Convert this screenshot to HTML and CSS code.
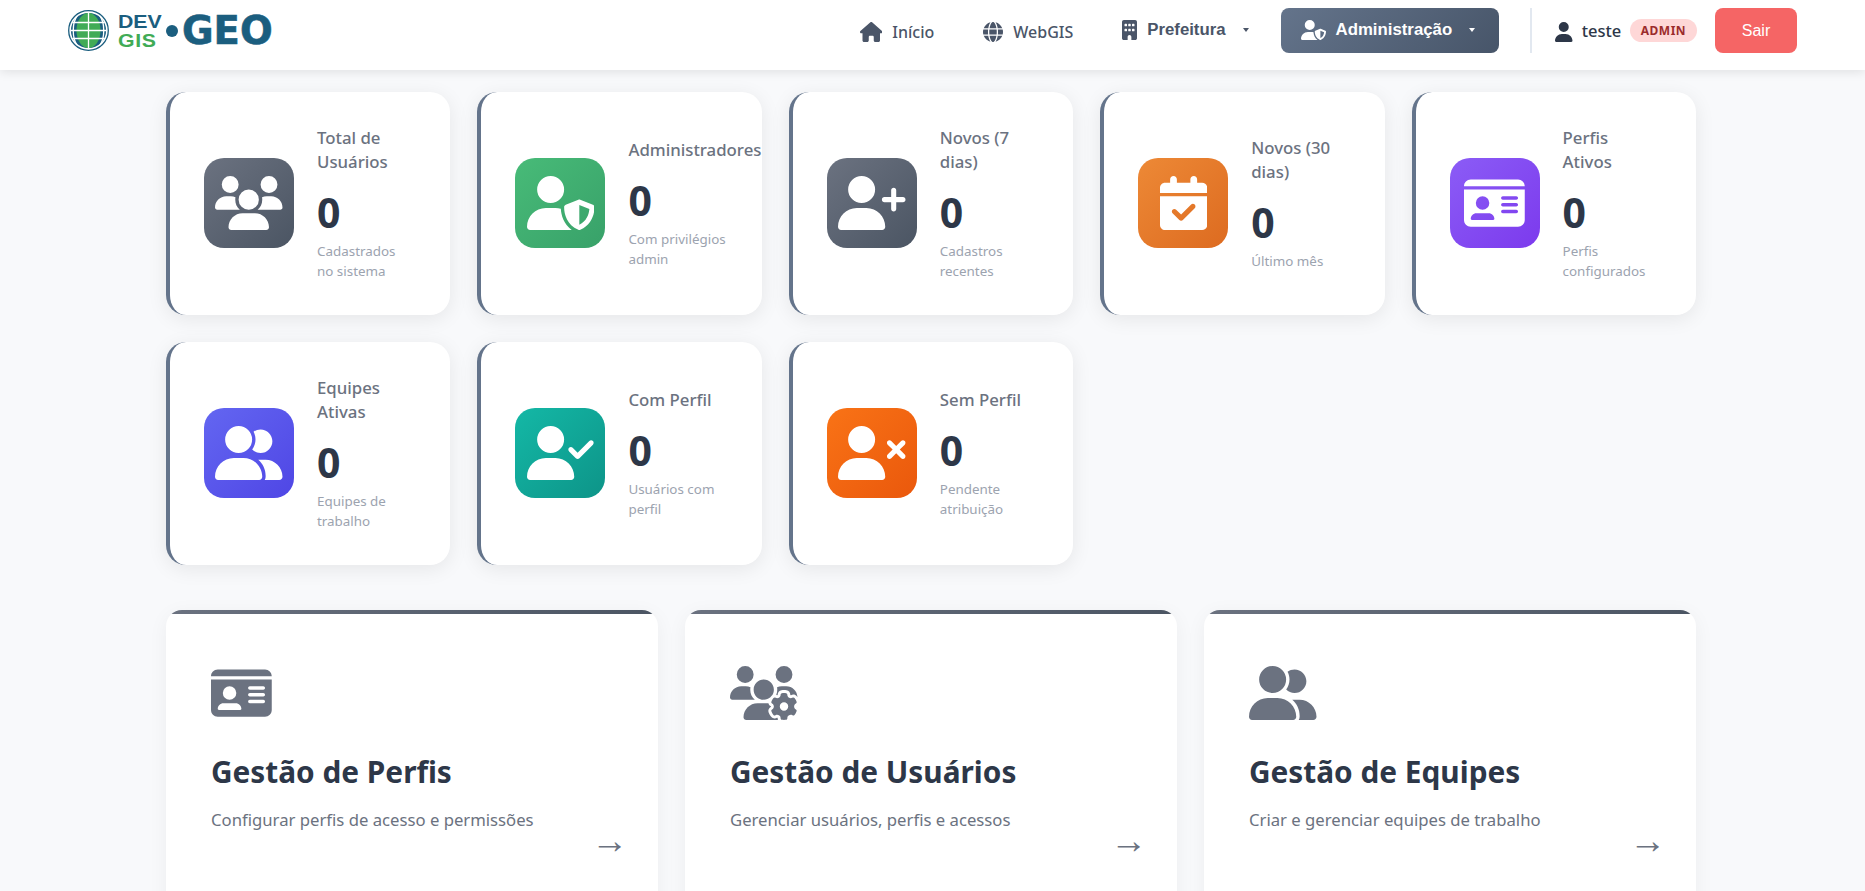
FILE: index.html
```html
<!DOCTYPE html>
<html lang="pt-BR">
<head>
<meta charset="utf-8">
<title>DevGIS GEO - Administração</title>
<link rel="stylesheet" href="styles.css">
</head>
<body>
<svg class="sprite" xmlns="http://www.w3.org/2000/svg">
<defs>
<g id="i-house"><path d="M575.8 255.5c0 18-15 32.1-32 32.1h-32l.7 160.2c0 2.7-.2 5.4-.5 8.1V472c0 22.1-17.9 40-40 40H456c-1.1 0-2.2 0-3.3-.1c-1.4 .1-2.8 .1-4.2 .1H416 392c-22.1 0-40-17.9-40-40V448 384c0-17.7-14.3-32-32-32H256c-17.7 0-32 14.3-32 32v64 24c0 22.1-17.9 40-40 40H160 128.1c-1.5 0-3-.1-4.5-.2c-1.2 .1-2.4 .2-3.6 .2H104c-22.1 0-40-17.9-40-40V360c0-.9 0-1.9 .1-2.8V287.6H32c-18 0-32-14-32-32.1c0-9 3-17 10-24L266.4 8c7-7 15-8 22-8s15 2 21 7L564.8 231.5c8 7 12 15 11 24z"/></g>
<g id="i-globe"><path d="M352 256c0 22.2-1.2 43.6-3.3 64H163.3c-2.2-20.4-3.3-41.8-3.3-64s1.2-43.6 3.3-64H348.7c2.2 20.4 3.3 41.8 3.3 64zm28.8-64H503.9c5.3 20.5 8.1 41.9 8.1 64s-2.8 43.5-8.1 64H380.8c2.1-20.6 3.2-42 3.2-64s-1.1-43.4-3.2-64zm112.6-32H376.7c-10-63.9-29.8-117.4-55.3-151.6c78.3 20.7 142 77.5 171.9 151.6zm-149.1 0H167.7c6.1-36.4 15.5-68.6 27-94.7c10.5-23.6 22.2-40.7 33.5-51.5C239.4 3.2 248.7 0 256 0s16.6 3.2 27.8 13.8c11.3 10.8 23 27.9 33.5 51.5c11.6 26 20.9 58.2 27 94.7zm-209 0H18.6C48.6 85.9 112.2 29.1 190.6 8.4C165.1 42.6 145.3 96.1 135.3 160zM8.1 192H131.2c-2.1 20.6-3.2 42-3.2 64s1.1 43.4 3.2 64H8.1C2.8 299.5 0 278.1 0 256s2.8-43.5 8.1-64zM194.7 446.6c-11.6-26-20.9-58.2-27-94.6H344.3c-6.1 36.4-15.5 68.6-27 94.6c-10.5 23.6-22.2 40.7-33.5 51.5C272.6 508.8 263.3 512 256 512s-16.6-3.2-27.8-13.8c-11.3-10.8-23-27.9-33.5-51.5zM135.3 352c10 63.9 29.8 117.4 55.3 151.6C112.2 482.9 48.6 426.1 18.6 352H135.3zm358.1 0c-30 74.1-93.6 130.9-171.9 151.6c25.5-34.2 45.2-87.7 55.3-151.6H493.4z"/></g>
<g id="i-building"><path d="M48 0C21.5 0 0 21.5 0 48V464c0 26.5 21.5 48 48 48h96V432c0-26.5 21.5-48 48-48s48 21.5 48 48v80h96c26.5 0 48-21.5 48-48V48c0-26.5-21.5-48-48-48H48zM64 240c0-8.8 7.2-16 16-16h32c8.8 0 16 7.2 16 16v32c0 8.8-7.2 16-16 16H80c-8.8 0-16-7.2-16-16V240zm112-16h32c8.8 0 16 7.2 16 16v32c0 8.8-7.2 16-16 16H176c-8.8 0-16-7.2-16-16V240c0-8.8 7.2-16 16-16zm80 16c0-8.8 7.2-16 16-16h32c8.8 0 16 7.2 16 16v32c0 8.8-7.2 16-16 16H272c-8.8 0-16-7.2-16-16V240zM80 96h32c8.8 0 16 7.2 16 16v32c0 8.8-7.2 16-16 16H80c-8.8 0-16-7.2-16-16V112c0-8.8 7.2-16 16-16zm80 16c0-8.8 7.2-16 16-16h32c8.8 0 16 7.2 16 16v32c0 8.8-7.2 16-16 16H176c-8.8 0-16-7.2-16-16V112zM272 96h32c8.8 0 16 7.2 16 16v32c0 8.8-7.2 16-16 16H272c-8.8 0-16-7.2-16-16V112c0-8.8 7.2-16 16-16z"/></g>
<g id="i-user"><path d="M224 256A128 128 0 1 0 224 0a128 128 0 1 0 0 256zm-45.7 48C79.8 304 0 383.8 0 482.3C0 498.7 13.3 512 29.7 512H418.3c16.4 0 29.7-13.3 29.7-29.7C448 383.8 368.2 304 269.7 304H178.3z"/></g>
<g id="i-shield"><path d="M224 256A128 128 0 1 0 224 0a128 128 0 1 0 0 256zm-45.7 48C79.8 304 0 383.8 0 482.3C0 498.7 13.3 512 29.7 512H418.3c1.8 0 3.5-.2 5.3-.5c-76.3-55.1-99.8-141-103.1-200.2c-16.1-4.8-33.1-7.3-50.7-7.3H178.3zm308.8-78.3l-120 48C358 277.4 352 286.2 352 296c0 63.3 25.9 168.8 134.8 214.2c5.9 2.5 12.6 2.5 18.5 0C614.1 464.8 640 359.3 640 296c0-9.8-6-18.6-15.1-22.3l-120-48c-5.7-2.3-12.1-2.3-17.8 0zM591.4 312c-3.9 50.7-27.2 116.7-95.4 149.7V273.8L591.4 312z"/></g>
<g id="i-users"><path d="M144 0a80 80 0 1 1 0 160A80 80 0 1 1 144 0zM512 0a80 80 0 1 1 0 160A80 80 0 1 1 512 0zM0 298.7C0 239.8 47.8 192 106.7 192h42.7c15.9 0 31 3.5 44.6 9.7c-1.3 7.2-1.9 14.7-1.9 22.3c0 38.2 16.8 72.5 43.3 96c-.2 0-.4 0-.7 0H21.3C9.6 320 0 310.4 0 298.7zM405.3 320c-.2 0-.4 0-.7 0c26.6-23.5 43.3-57.8 43.3-96c0-7.6-.7-15-1.9-22.3c13.6-6.3 28.7-9.7 44.6-9.7h42.7C592.2 192 640 239.8 640 298.7c0 11.8-9.6 21.3-21.3 21.3H405.3zM224 224a96 96 0 1 1 192 0 96 96 0 1 1 -192 0zM128 485.3C128 411.7 187.7 352 261.3 352H378.7C452.3 352 512 411.7 512 485.3c0 14.7-11.9 26.7-26.7 26.7H154.7c-14.7 0-26.7-11.9-26.7-26.7z"/></g>
<g id="i-userplus"><path d="M96 128a128 128 0 1 1 256 0A128 128 0 1 1 96 128zM0 482.3C0 383.8 79.8 304 178.3 304h91.4C368.2 304 448 383.8 448 482.3c0 16.4-13.3 29.7-29.7 29.7H29.7C13.3 512 0 498.7 0 482.3zM504 312V248H440c-13.3 0-24-10.7-24-24s10.7-24 24-24h64V136c0-13.3 10.7-24 24-24s24 10.7 24 24v64h64c13.3 0 24 10.7 24 24s-10.7 24-24 24H552v64c0 13.3-10.7 24-24 24s-24-10.7-24-24z"/></g>
<g id="i-usercheck"><path d="M96 128a128 128 0 1 1 256 0A128 128 0 1 1 96 128zM0 482.3C0 383.8 79.8 304 178.3 304h91.4C368.2 304 448 383.8 448 482.3c0 16.4-13.3 29.7-29.7 29.7H29.7C13.3 512 0 498.7 0 482.3zM625 177L497 305c-9.4 9.4-24.6 9.4-33.9 0L399 241c-9.4-9.4-9.4-24.6 0-33.9s24.6-9.4 33.9 0l47 47L591 143c9.4-9.4 24.6-9.4 33.9 0s9.4 24.6 0 33.9z"/></g>
<g id="i-userx"><path d="M96 128a128 128 0 1 1 256 0A128 128 0 1 1 96 128zM0 482.3C0 383.8 79.8 304 178.3 304h91.4C368.2 304 448 383.8 448 482.3c0 16.4-13.3 29.7-29.7 29.7H29.7C13.3 512 0 498.7 0 482.3zM471 143c9.4-9.4 24.6-9.4 33.9 0l47 47 47-47c9.4-9.4 24.6-9.4 33.9 0s9.4 24.6 0 33.9l-47 47 47 47c9.4 9.4 9.4 24.6 0 33.9s-24.6 9.4-33.9 0l-47-47-47 47c-9.4 9.4-24.6 9.4-33.9 0s-9.4-24.6 0-33.9l47-47-47-47c-9.4-9.4-9.4-24.6 0-33.9z"/></g>
<g id="i-calendar"><path d="M128 0c17.7 0 32 14.3 32 32V64H288V32c0-17.7 14.3-32 32-32s32 14.3 32 32V64h48c26.5 0 48 21.5 48 48v48H0V112C0 85.5 21.5 64 48 64H96V32c0-17.7 14.3-32 32-32zM0 192H448V464c0 26.5-21.5 48-48 48H48c-26.5 0-48-21.5-48-48V192zM329 305c9.4-9.4 9.4-24.6 0-33.9s-24.6-9.4-33.9 0l-95 95-47-47c-9.4-9.4-24.6-9.4-33.9 0s-9.4 24.6 0 33.9l64 64c9.4 9.4 24.6 9.4 33.9 0L329 305z"/></g>
<g id="i-idcard"><path d="M0 96l576 0c0-35.3-28.7-64-64-64H64C28.7 32 0 60.7 0 96zm0 32V416c0 35.3 28.7 64 64 64H512c35.3 0 64-28.7 64-64V128H0zM64 405.3c0-29.5 23.9-53.3 53.3-53.3H234.7c29.5 0 53.3 23.9 53.3 53.3c0 5.9-4.8 10.7-10.7 10.7H74.7c-5.9 0-10.7-4.8-10.7-10.7zM176 192a64 64 0 1 1 0 128 64 64 0 1 1 0-128zm176 16c0-8.8 7.2-16 16-16H496c8.8 0 16 7.2 16 16s-7.2 16-16 16H368c-8.8 0-16-7.2-16-16zm0 64c0-8.8 7.2-16 16-16H496c8.8 0 16 7.2 16 16s-7.2 16-16 16H368c-8.8 0-16-7.2-16-16zm0 64c0-8.8 7.2-16 16-16H496c8.8 0 16 7.2 16 16s-7.2 16-16 16H368c-8.8 0-16-7.2-16-16z"/></g>
<g id="i-usergroup"><path d="M96 128a128 128 0 1 1 256 0A128 128 0 1 1 96 128zM0 482.3C0 383.8 79.8 304 178.3 304h91.4C368.2 304 448 383.8 448 482.3c0 16.4-13.3 29.7-29.7 29.7H29.7C13.3 512 0 498.7 0 482.3zM609.3 512H471.4c5.4-9.4 8.6-20.3 8.6-32v-8c0-60.7-27.1-115.2-69.8-151.8c2.4-.1 4.7-.2 7.1-.2h61.4C567.8 320 640 392.2 640 481.3c0 17-13.8 30.7-30.7 30.7zM432 256c-31 0-59-12.6-79.3-32.9C372.4 196.5 384 163.6 384 128c0-26.8-6.6-52.1-18.3-74.3C384.3 40.1 407.2 32 432 32c61.9 0 112 50.1 112 112s-50.1 112-112 112z"/></g>
<g id="i-usersgear"><path d="M144 160A80 80 0 1 0 144 0a80 80 0 1 0 0 160zm368 0A80 80 0 1 0 512 0a80 80 0 1 0 0 160zM0 298.7C0 310.4 9.6 320 21.3 320H234.7c.2 0 .4 0 .7 0c-26.6-23.5-43.3-57.8-43.3-96c0-7.6 .7-15 1.9-22.3c-13.6-6.3-28.7-9.7-44.6-9.7H106.7C47.8 192 0 239.8 0 298.7zM320 320c24 0 45.9-8.8 62.7-23.3c2.5-3.7 5.2-7.3 8-10.7c2.7-3.3 5.7-6.1 9-8.3C410 262.3 416 243.9 416 224c0-53-43-96-96-96s-96 43-96 96s43 96 96 96zm65.4 60.2c-10.3-5.9-18.1-16.2-20.8-28.2H261.3C187.7 352 128 411.7 128 485.3c0 14.7 11.9 26.7 26.7 26.7H455.2c-2.1-5.2-3.2-10.9-3.2-16.4v-3c-1.3-.7-2.7-1.5-4-2.3l-2.6 1.5c-16.8 9.7-40.5 8-54.7-9.7c-4.5-5.6-8.6-11.5-12.4-17.6l-.1-.2-.1-.2-2.4-4.1-.1-.2-.1-.2c-3.4-6.2-6.4-12.6-9-19.3c-8.2-21.2 2.2-42.6 19-52.3l2.7-1.5c0-.8 0-1.5 0-2.3s0-1.5 0-2.3l-2.7-1.5zM533.3 192H490.7c-15.9 0-31 3.5-44.6 9.7c1.3 7.2 1.9 14.7 1.9 22.3c0 17.4-3.5 33.9-9.7 49c2.5 .9 4.9 2 7.1 3.3l2.6 1.5c1.3-.8 2.6-1.6 4-2.3v-3c0-19.4 13.3-39.1 35.8-42.6c7.9-1.2 16-1.9 24.2-1.9s16.3 .6 24.2 1.9c22.5 3.5 35.8 23.2 35.8 42.6v3c1.3 .7 2.7 1.5 4 2.3l2.6-1.5c16.8-9.7 40.5-8 54.7 9.7c2.3 2.8 4.5 5.8 6.6 8.7c-2.1-57.1-49-102.7-106.6-102.7zm91.3 163.9c6.3-3.6 9.5-11.1 6.8-18c-2.1-5.5-4.6-10.8-7.4-15.9l-2.3-4c-3.1-5.1-6.5-9.9-10.2-14.5c-4.6-5.7-12.7-6.7-19-3l-2.9 1.7c-9.2 5.3-20.4 4-29.6-1.3s-16.1-14.5-16.1-25.1v-3.4c0-7.3-4.9-13.8-12.1-14.9c-6.5-1-13.1-1.5-19.9-1.5s-13.4 .5-19.9 1.5c-7.2 1.1-12.1 7.6-12.1 14.9v3.4c0 10.6-6.9 19.8-16.1 25.1s-20.4 6.6-29.6 1.3l-2.9-1.7c-6.3-3.6-14.4-2.6-19 3c-3.7 4.6-7.1 9.4-10.2 14.5l-2.3 3.9c-2.8 5.1-5.3 10.4-7.4 15.9c-2.6 6.8 .5 14.3 6.8 17.9l2.9 1.7c9.2 5.3 13.7 15.8 13.7 26.4s-4.5 21.1-13.7 26.4l-3 1.7c-6.3 3.6-9.5 11.1-6.8 17.9c2.1 5.5 4.6 10.7 7.4 15.8l2.4 4.1c3 5.1 6.4 9.9 10.1 14.5c4.6 5.7 12.7 6.7 19 3l2.9-1.7c9.2-5.3 20.4-4 29.6 1.3s16.1 14.5 16.1 25.1v3.4c0 7.3 4.9 13.8 12.1 14.9c6.5 1 13.1 1.5 19.9 1.5s13.4-.5 19.9-1.5c7.2-1.1 12.1-7.6 12.1-14.9v-3.4c0-10.6 6.9-19.8 16.1-25.1s20.4-6.6 29.6-1.3l2.9 1.7c6.3 3.6 14.4 2.6 19-3c3.7-4.6 7.1-9.4 10.2-14.4l2.4-4.2c2.8-5.1 5.3-10.3 7.4-15.8c2.6-6.8-.5-14.3-6.8-17.9l-3-1.7c-9.2-5.3-13.7-15.8-13.7-26.4s4.5-21.1 13.7-26.4l3-1.7zM472 384a40 40 0 1 1 80 0 40 40 0 1 1 -80 0z"/></g>
</defs>
</svg>

<header class="topbar">
  <a class="logo" href="#">
    <svg class="logo-globe" viewBox="0 0 41 41" xmlns="http://www.w3.org/2000/svg">
      <circle cx="20.5" cy="20.5" r="19.8" fill="#fff" stroke="#1b5e7f" stroke-width="1.3"/>
      <circle cx="20.5" cy="20.5" r="17.6" fill="#1b5e7f"/>
      <ellipse cx="20.5" cy="20.5" rx="12" ry="17.6" fill="#41ab56"/>
      <path d="M20.5 2.5V38.5M2.5 20.5H38.5M4.5 12.5H36.5M4.5 28.5H36.5" fill="none" stroke="#fff" stroke-width="1.3"/>
      <path d="M9 6C4 13 4 28 9 35M32 6C37 13 37 28 32 35" fill="none" stroke="#fff" stroke-width="1.3"/>
    </svg>
    <span class="logo-stack"><span class="logo-dev">DEV</span><span class="logo-gis">GIS</span></span>
    <span class="logo-dot"></span>
    <span class="logo-geo">GEO</span>
  </a>
  <nav class="nav">
    <a class="nav-item" href="#"><svg class="nav-ic" viewBox="0 0 576 512"><use href="#i-house"/></svg>Início</a>
    <a class="nav-item" href="#"><svg class="nav-ic" viewBox="0 0 512 512"><use href="#i-globe"/></svg>WebGIS</a>
    <button class="nav-btn" type="button"><svg class="nav-ic" viewBox="0 0 384 512"><use href="#i-building"/></svg>Prefeitura<span class="caret"></span></button>
    <button class="nav-btn nav-btn-active" type="button"><svg class="nav-ic" viewBox="0 0 640 512"><use href="#i-shield"/></svg>Administração<span class="caret"></span></button>
    <div class="user-box">
      <svg class="nav-ic user-ic" viewBox="0 0 448 512"><use href="#i-user"/></svg>
      <span class="user-name">teste</span>
      <span class="badge">ADMIN</span>
    </div>
    <button class="logout" type="button">Sair</button>
  </nav>
</header>

<main class="main">
  <section class="stats">
    <article class="stat">
      <div class="stat-icon g-gray"><svg class="ic" viewBox="0 0 640 512"><use href="#i-users"/></svg></div>
      <div class="stat-body"><h3 class="stat-label">Total de Usuários</h3><div class="stat-value">0</div><p class="stat-sub">Cadastrados no&nbsp;sistema</p></div>
    </article>
    <article class="stat">
      <div class="stat-icon g-green"><svg class="ic" viewBox="0 0 640 512"><use href="#i-shield"/></svg></div>
      <div class="stat-body"><h3 class="stat-label">Administradores</h3><div class="stat-value">0</div><p class="stat-sub">Com&nbsp;privilégios admin</p></div>
    </article>
    <article class="stat">
      <div class="stat-icon g-gray"><svg class="ic" viewBox="0 0 640 512"><use href="#i-userplus"/></svg></div>
      <div class="stat-body"><h3 class="stat-label">Novos (7 dias)</h3><div class="stat-value">0</div><p class="stat-sub">Cadastros recentes</p></div>
    </article>
    <article class="stat">
      <div class="stat-icon g-orange"><svg class="ic" viewBox="0 0 448 512"><use href="#i-calendar"/></svg></div>
      <div class="stat-body"><h3 class="stat-label">Novos (30 dias)</h3><div class="stat-value">0</div><p class="stat-sub">Último mês</p></div>
    </article>
    <article class="stat">
      <div class="stat-icon g-purple"><svg class="ic" viewBox="0 0 576 512"><use href="#i-idcard"/></svg></div>
      <div class="stat-body"><h3 class="stat-label">Perfis<br>Ativos</h3><div class="stat-value">0</div><p class="stat-sub">Perfis configurados</p></div>
    </article>
    <article class="stat">
      <div class="stat-icon g-indigo"><svg class="ic" viewBox="0 0 640 512"><use href="#i-usergroup"/></svg></div>
      <div class="stat-body"><h3 class="stat-label">Equipes Ativas</h3><div class="stat-value">0</div><p class="stat-sub">Equipes de trabalho</p></div>
    </article>
    <article class="stat">
      <div class="stat-icon g-teal"><svg class="ic" viewBox="0 0 640 512"><use href="#i-usercheck"/></svg></div>
      <div class="stat-body"><h3 class="stat-label">Com Perfil</h3><div class="stat-value">0</div><p class="stat-sub">Usuários com perfil</p></div>
    </article>
    <article class="stat">
      <div class="stat-icon g-flame"><svg class="ic" viewBox="0 0 640 512"><use href="#i-userx"/></svg></div>
      <div class="stat-body"><h3 class="stat-label">Sem Perfil</h3><div class="stat-value">0</div><p class="stat-sub">Pendente atribuição</p></div>
    </article>
  </section>

  <section class="actions">
    <a class="action" href="#">
      <svg class="ic action-ic" viewBox="0 0 576 512"><use href="#i-idcard"/></svg>
      <h2 class="action-title">Gestão de Perfis</h2>
      <p class="action-desc">Configurar perfis de acesso e permissões</p>
      <span class="action-arrow">→</span>
    </a>
    <a class="action" href="#">
      <svg class="ic action-ic" viewBox="0 0 640 512"><use href="#i-usersgear"/></svg>
      <h2 class="action-title">Gestão de Usuários</h2>
      <p class="action-desc">Gerenciar usuários, perfis e acessos</p>
      <span class="action-arrow">→</span>
    </a>
    <a class="action" href="#">
      <svg class="ic action-ic" viewBox="0 0 640 512"><use href="#i-usergroup"/></svg>
      <h2 class="action-title">Gestão de Equipes</h2>
      <p class="action-desc">Criar e gerenciar equipes de trabalho</p>
      <span class="action-arrow">→</span>
    </a>
  </section>
</main>
</body>
</html>
```
FILE: styles.css
```css
* { box-sizing: border-box; }
html, body { margin: 0; height: 100%; overflow: hidden; }
body {
  background: #f8f9fb;
  color: #2d3748;
  font-family: "Noto Sans", "Open Sans", sans-serif;
}
a { color: inherit; text-decoration: none; }
.sprite { display: none; }

.topbar {
  height: 70px;
  background: #fff;
  box-shadow: 0 2px 10px rgba(0, 0, 0, .1);
  display: flex;
  align-items: center;
  justify-content: space-between;
  padding: 8px 68px 17px;
}
.logo { display: flex; align-items: center; color: #1b5e7f; }
.logo-globe { width: 41px; height: 41px; margin-right: 9px; }
.logo-stack {
  display: flex;
  flex-direction: column;
  font-family: "Liberation Sans", sans-serif;
  font-weight: 700;
  line-height: 19px;
  font-size: 19px;
  width: 48px;
  transform: scaleX(1.12);
  transform-origin: left center;
}
.logo-gis { color: #41ab56; letter-spacing: .6px; }
.logo-dot { width: 12px; height: 12px; border-radius: 50%; background: #1b5e7f; margin-right: 4px; }
.logo-geo {
  font-family: "DejaVu Sans", sans-serif;
  font-weight: 700;
  font-size: 38.5px;
  line-height: 40px;
  -webkit-text-stroke: .6px #1b5e7f;
}

.nav { display: flex; align-items: center; gap: 16px; }
.nav-item, .nav-btn {
  display: flex;
  align-items: center;
  gap: 10px;
  height: 45px;
  color: #4a5568;
  font-size: 16px;
  font-weight: 500;
  border: 0;
  background: none;
}
.nav-item { padding: 2px 17px 0 16px; }
.nav-btn {
  padding: 0 16px 2px;
  font-family: "Liberation Sans", Arial, sans-serif;
  font-size: 16.8px;
  font-weight: 700;
}
.nav-ic { height: 20px; fill: currentColor; flex: none; }
.caret {
  width: 0;
  height: 0;
  border-left: 3.5px solid transparent;
  border-right: 3.5px solid transparent;
  border-top: 4px solid currentColor;
  margin-left: 7px;
}
.nav-btn-active {
  background: linear-gradient(135deg, #64748b, #475569);
  color: #fff;
  border-radius: 8px;
  padding: 0 24px 1px 20px;
}
.user-box {
  display: flex;
  align-items: center;
  height: 45px;
  border-left: 2px solid #e2e8f0;
  padding-left: 23px;
  margin-left: 15px;
  gap: 9px;
  color: #2d3748;
}
.user-ic { margin-top: 2px; }
.user-name { font-size: 16.5px; font-weight: 500; }
.badge {
  background: #fed7d7;
  color: #9b2c2c;
  font-size: 12px;
  font-weight: 700;
  letter-spacing: .5px;
  height: 23px;
  line-height: 23px;
  padding: 0 10.5px;
  border-radius: 12px;
}
.logout {
  width: 82px;
  height: 45px;
  border: 0;
  border-radius: 8px;
  background: #f56565;
  color: #fff;
  font-family: "Liberation Sans", Arial, sans-serif;
  font-size: 16px;
  margin-left: 2.4px;
}

.main { width: 1530px; margin-left: 166px; padding-top: 22px; }
.stats { display: grid; grid-template-columns: repeat(5, 1fr); gap: 27px; }
.stat {
  display: flex;
  align-items: center;
  gap: 23px;
  min-width: 0;
  height: 223px;
  padding: 0 34px 1px;
  background: #fff;
  border-left: 4px solid #64748b;
  border-radius: 20px;
  box-shadow: 0 4px 20px rgba(0, 0, 0, .08);
}
.stat-icon {
  flex: none;
  width: 90px;
  height: 90px;
  border-radius: 20px;
  display: flex;
  align-items: center;
  justify-content: center;
  color: #fff;
}
.ic { height: 54px; fill: currentColor; }
.g-gray { background: linear-gradient(135deg, #6b7280, #4b5563); }
.g-green { background: linear-gradient(135deg, #48bb78, #38a169); }
.g-orange { background: linear-gradient(135deg, #ed8936, #dd6b20); }
.g-purple { background: linear-gradient(135deg, #8b5cf6, #7c3aed); }
.g-indigo { background: linear-gradient(135deg, #6366f1, #4f46e5); }
.g-teal { background: linear-gradient(135deg, #14b8a6, #0d9488); }
.g-flame { background: linear-gradient(135deg, #f97316, #ea580c); }
.stat-body { min-width: 0; }
.stat-label { margin: 0 0 14px; font-size: 16.8px; line-height: 24px; font-weight: 500; color: #6b7280; }
.stat-value { font-size: 41px; line-height: 48px; font-weight: 700; color: #2d3748; margin-bottom: 5px; }
.stat-sub { margin: 0; font-size: 13.4px; line-height: 20px; color: #9ca3af; }

.actions { display: grid; grid-template-columns: repeat(3, 1fr); gap: 27px; margin-top: 45px; }
.action {
  display: flex;
  flex-direction: column;
  height: 300px;
  padding: 56px 30px 0 45px;
  border-radius: 16px;
  background: linear-gradient(135deg, #6b7280, #4b5563) top / 100% 4px no-repeat, #fff;
  box-shadow: 0 4px 20px rgba(0, 0, 0, .05);
}
.action-ic { color: #6b7280; align-self: flex-start; }
.action-title { margin: 32px 0 0; font-size: 29.8px; line-height: 40px; font-weight: 700; color: #2d3748; }
.action-desc { margin: 16px 0 0; font-size: 16.7px; line-height: 24px; color: #6b7280; }
.action-arrow {
  align-self: flex-end;
  margin-top: -7px;
  font-family: "Liberation Sans", sans-serif;
  font-size: 37px;
  line-height: 32px;
  color: #6b7280;
}
```
